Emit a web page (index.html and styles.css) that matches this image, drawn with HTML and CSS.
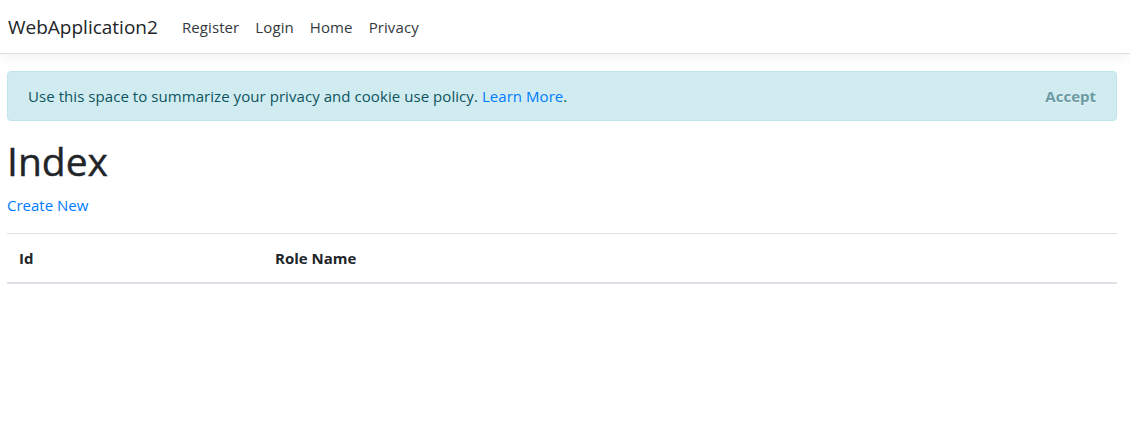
FILE: index.html
```html
<!DOCTYPE html>
<html lang="en">
<head>
<meta charset="utf-8">
<title>Index - WebApplication2</title>
<link rel="stylesheet" href="styles.css">
</head>
<body>
<header class="navbar">
  <div class="nav-inner">
    <a class="brand" href="#">WebApplication2</a>
    <nav class="nav-links">
      <a class="nav-link" href="#">Register</a>
      <a class="nav-link" href="#">Login</a>
      <a class="nav-link" href="#">Home</a>
      <a class="nav-link" href="#">Privacy</a>
    </nav>
  </div>
</header>
<main class="container">
  <div class="alert">
    <span>Use this space to summarize your privacy and cookie use policy. <a class="link" href="#">Learn More</a>.</span>
    <button class="accept" type="button">Accept</button>
  </div>
  <h1 class="title">Index</h1>
  <p class="create"><a class="link" href="#">Create New</a></p>
  <table class="table">
    <thead>
      <tr>
        <th class="col-id">Id</th>
        <th class="col-name">Role Name</th>
        <th></th>
      </tr>
    </thead>
    <tbody></tbody>
  </table>
</main>
</body>
</html>
```
FILE: styles.css
```css
* { box-sizing: border-box; }
html, body { margin: 0; padding: 0; background: #fff; }
body {
  font-family: "Open Sans", "Noto Sans", sans-serif;
  font-size: 15px;
  line-height: 24px;
  color: #212529;
}
a { text-decoration: none; }
.navbar {
  height: 54px;
  border-bottom: 1px solid #dee2e6;
  box-shadow: 0 4px 12px rgba(0, 0, 0, 0.05);
  background: #fff;
}
.nav-inner {
  height: 53px;
  display: flex;
  align-items: center;
  padding: 0 8px;
}
.brand {
  font-size: 19px;
  color: #212529;
  margin-right: 16px;
  line-height: 30px;
}
.nav-links { display: flex; }
.nav-link {
  color: #343a40;
  padding: 0 8px;
  line-height: 24px;
  letter-spacing: 0.1px;
}
.container { padding: 17px 13px 0 7px; }
.alert {
  display: flex;
  justify-content: space-between;
  align-items: center;
  height: 50px;
  padding: 0 20px;
  background: #d1ecf1;
  border: 1px solid #bee5eb;
  border-radius: 4px;
  color: #0c5460;
  margin-bottom: 16px;
  letter-spacing: 0.06px;
}
.link { color: #007bff; }
.accept {
  background: transparent;
  border: 0;
  padding: 0;
  font-family: inherit;
  font-size: 15px;
  font-weight: 700;
  color: #6b9aa3;
  text-shadow: 0 1px 0 rgba(255, 255, 255, 0.5);
}
.title {
  font-size: 39px;
  font-weight: 500;
  line-height: 48px;
  margin: 0 0 8px;
  -webkit-text-stroke: 0.4px #212529;
}
.create { margin: 0 0 16px; }
.table {
  width: 100%;
  border-collapse: collapse;
}
.table th {
  text-align: left;
  font-weight: 700;
  padding: 12px;
  border-top: 1px solid #dee2e6;
  border-bottom: 2px solid #dee2e6;
  line-height: 24px;
  height: 49px;
}
.col-id { width: 256px; }
.col-name { width: 400px; }
```
